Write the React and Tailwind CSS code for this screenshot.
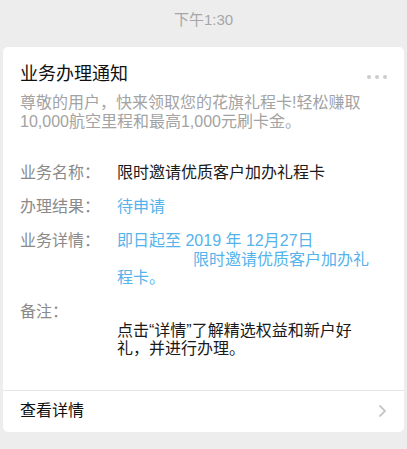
const font = { fontFamily: '"Liberation Sans", "Noto Sans CJK SC", sans-serif' };

const rows = [
  { label: "业务名称：", value: "限时邀请优质客户加办礼程卡", tone: "text-[#1a1a1a]" },
  { label: "办理结果：", value: "待申请", tone: "text-[#55b3ec]" },
];

export default function App() {
  return (
    <div className="min-h-screen bg-[#ededed]" style={font}>
      <div className="h-[40px] leading-[40px] text-center text-[15px] text-[#a6a6a6]">下午1:30</div>

      <div className="mx-[3px] mt-[7px] rounded-[5px] bg-white">
        <div className="pl-[17px] pr-[17px] pt-[15px] pb-[31px]">
          <div className="flex items-center justify-between">
            <h1 className="text-[18px] leading-[25px] text-[#111]">业务办理通知</h1>
            <div className="flex gap-[4px] mt-[5px]">
              <span className="w-[4px] h-[4px] rounded-full bg-[#cdcdcd]" />
              <span className="w-[4px] h-[4px] rounded-full bg-[#cdcdcd]" />
              <span className="w-[4px] h-[4px] rounded-full bg-[#cdcdcd]" />
            </div>
          </div>

          <p className="mt-[7px] text-[16px] leading-[18.5px] text-[#a3a3a3] pr-[10px]">
            尊敬的用户，快来领取您的花旗礼程卡!轻松赚取10,000航空里程和最高1,000元刷卡金。
          </p>

          <div className="mt-[33px] flex flex-col gap-[15.5px] text-[16px] leading-[18.5px]">
            {rows.map((r) => (
              <div key={r.label} className="flex">
                <div className="w-[97px] shrink-0 text-[#8a8a8a]">{r.label}</div>
                <div className={`w-[253px] ${r.tone}`}>{r.value}</div>
              </div>
            ))}

            <div className="flex">
              <div className="w-[97px] shrink-0 text-[#8a8a8a]">业务详情：</div>
              <div className="w-[253px] text-[#55b3ec]">
                即日起至 2019 年 12月27日
                <br />
                <span className="inline-block w-[76px]" />
                限时邀请优质客户加办礼程卡。
              </div>
            </div>

            <div className="flex">
              <div className="w-[97px] shrink-0 text-[#8a8a8a]">备注：</div>
              <div className="w-[253px] text-[#1a1a1a]">
                <br />
                点击“详情”了解精选权益和新户好礼，并进行办理。
              </div>
            </div>
          </div>
        </div>

        <div className="h-[42px] border-t border-[#e6e6e6] flex items-center justify-between pl-[17px] pr-[17px]">
          <span className="text-[16px] text-[#111]">查看详情</span>
          <svg width="9" height="14" viewBox="0 0 9 14" fill="none">
            <polyline points="1.5,1.5 7,7 1.5,12.5" stroke="#c7c7c7" strokeWidth="1.8" />
          </svg>
        </div>
      </div>
    </div>
  );
}
